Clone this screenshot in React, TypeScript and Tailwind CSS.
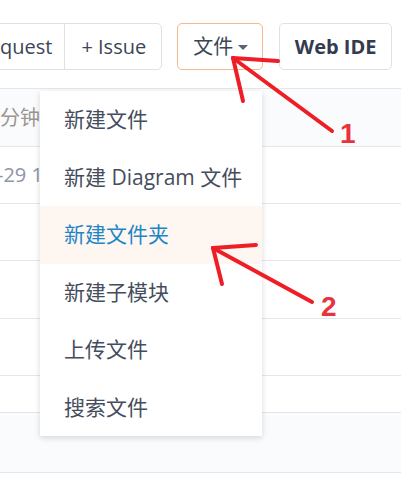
import React from "react";

const menuItems = ["新建文件", "新建 Diagram 文件", "新建文件夹", "新建子模块", "上传文件", "搜索文件"];

export default function App() {
  return (
    <div
      className="relative w-[401px] h-[479px] overflow-hidden bg-white text-[20px] text-[#3b4657]"
      style={{ fontFamily: '"Open Sans", "Noto Sans CJK SC", sans-serif' }}
    >
      {/* toolbar */}
      <div className="flex items-center pt-[23px]">
        <div className="flex h-[47px] -ml-[2px] rounded-r-[5px] border border-[#dde2e8]">
          <button className="pl-[1px] pr-[12px] border-r border-[#dde2e8] leading-none">quest</button>
          <button className="pl-[16px] pr-[15px] leading-none">+ Issue</button>
        </div>
        <button className="ml-[15px] h-[47px] flex items-center pl-[15px] pr-[14px] rounded-[5px] border border-[#f4b98a] leading-none">
          文件
          <span className="ml-[5px] mt-[2px] w-0 h-0 border-l-[5px] border-r-[5px] border-t-[5px] border-l-transparent border-r-transparent border-t-[#5b6270]" />
        </button>
        <button className="ml-[16px] h-[47px] w-[113px] rounded-[5px] border border-[#dde2e8] font-bold text-[#333c4e] leading-none">
          Web IDE
        </button>
      </div>

      {/* file table behind the menu */}
      <div className="mt-[18px] border-t border-[#e3e7ed]">
        <div className="h-[58px] flex items-center bg-[#fafbfc] border-b border-[#e3e7ed] text-[#9a9691]">分钟</div>
        <div className="h-[57px] flex items-center border-b border-[#e3e7ed] text-[#8c96a6]">
          <span className="-ml-[3px]">-29 1</span>
        </div>
        <div className="h-[57px] border-b border-[#e3e7ed]" />
        <div className="h-[58px] border-b border-[#e3e7ed]" />
        <div className="h-[57px] border-b border-[#e3e7ed]" />
        <div className="h-[37px] border-b border-[#e3e7ed]" />
        <div className="h-[60px] bg-[#fafbfc] border-b border-[#e3e7ed]" />
      </div>

      {/* dropdown menu */}
      <div className="absolute left-[40px] top-[91px] w-[222px] bg-white text-[21px] shadow-[0_2px_6px_rgba(0,0,0,0.15)]">
        {menuItems.map((item, i) => (
          <div
            key={item}
            className={
              i === 2
                ? "h-[57.5px] flex items-center pl-[24px] bg-[#fdf6f1] text-[#1f86c6]"
                : "h-[57.5px] flex items-center pl-[24px] text-[#454d5d]"
            }
          >
            {item}
          </div>
        ))}
      </div>

      {/* red annotations */}
      <svg className="absolute left-0 top-0 pointer-events-none" width="401" height="479" viewBox="0 0 401 479">
        <g stroke="#ee1d26" strokeWidth="4" strokeLinecap="round" fill="none">
          <line x1="233" y1="58" x2="332" y2="131" />
          <line x1="233" y1="58" x2="278" y2="61" />
          <line x1="233" y1="58" x2="243" y2="101" />
          <line x1="213" y1="248" x2="312" y2="302" />
          <line x1="213" y1="248" x2="256" y2="245" />
          <line x1="213" y1="248" x2="222" y2="284" />
        </g>
        <text x="340" y="143" fill="#e8333f" fontSize="28" fontWeight="bold" fontFamily="Liberation Sans, sans-serif">1</text>
        <text x="321" y="316" fill="#e8333f" fontSize="28" fontWeight="bold" fontFamily="Liberation Sans, sans-serif">2</text>
      </svg>
    </div>
  );
}
